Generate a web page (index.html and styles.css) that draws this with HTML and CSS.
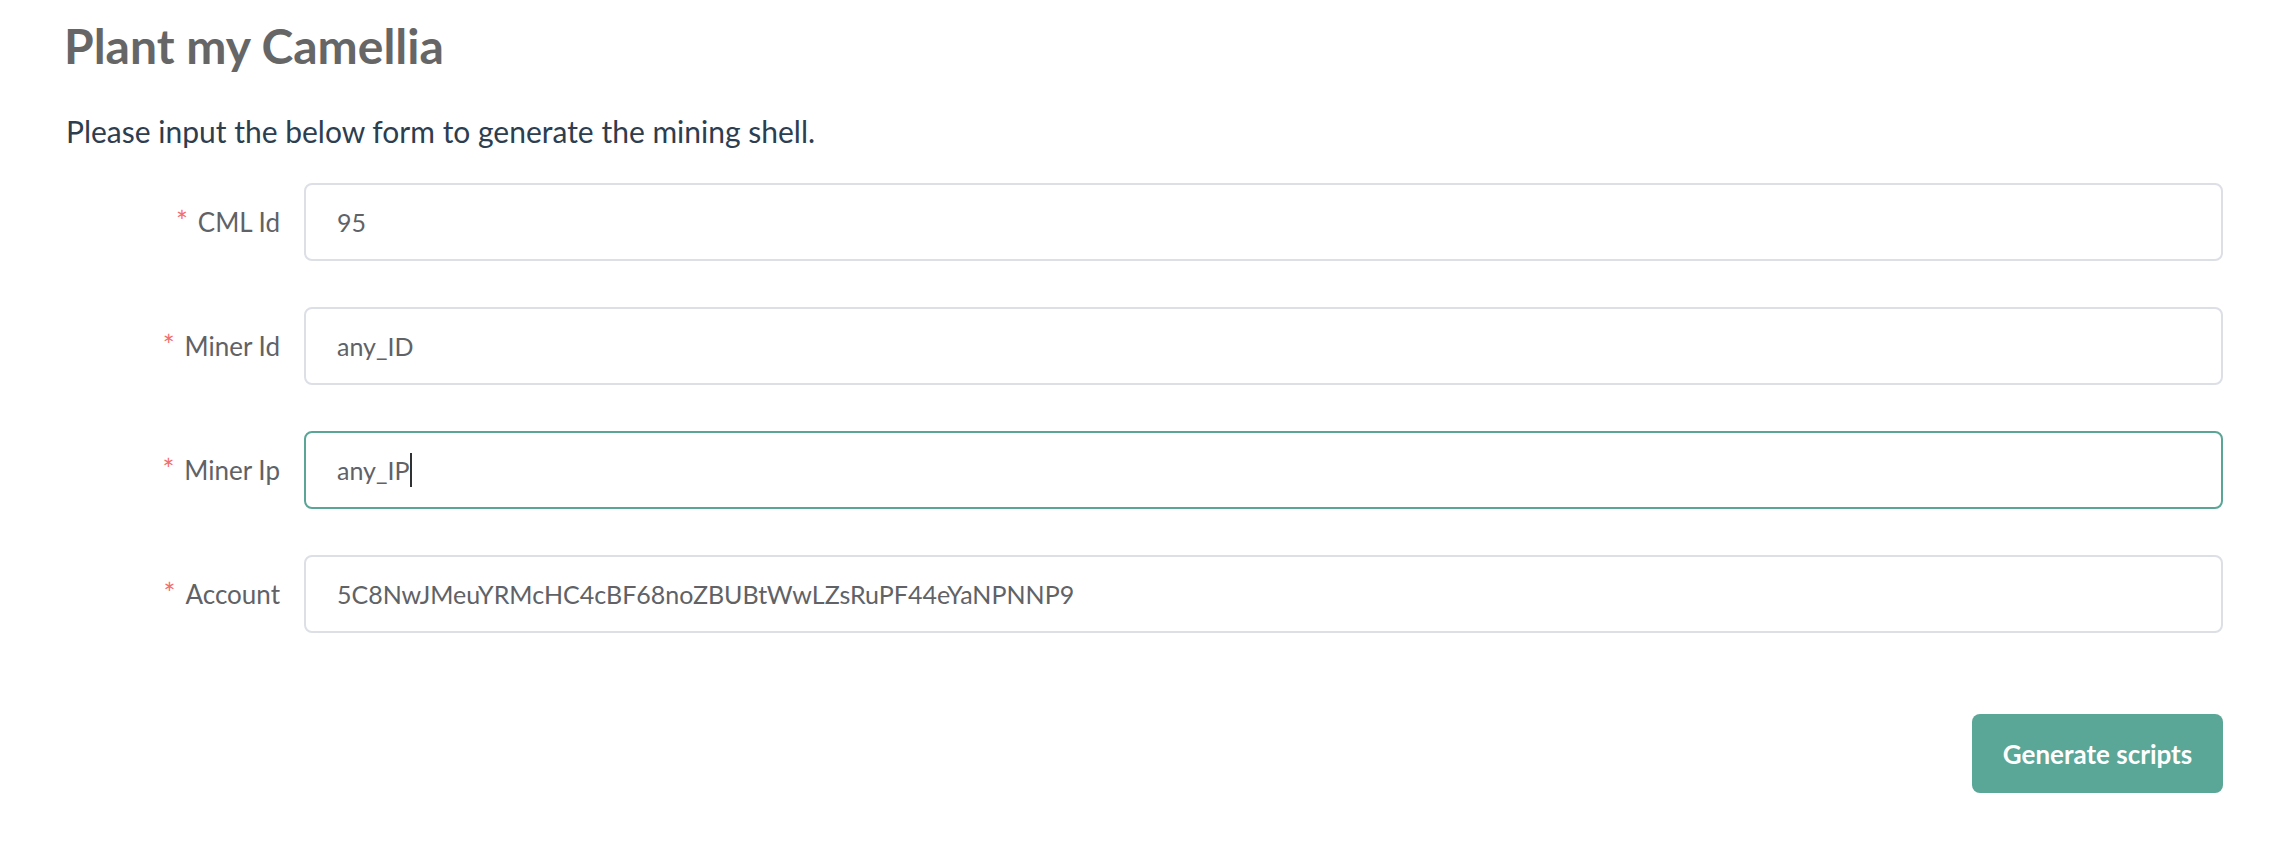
FILE: index.html
```html
<!DOCTYPE html>
<html lang="en">
<head>
<meta charset="utf-8">
<title>Plant my Camellia</title>
<link rel="stylesheet" href="styles.css">
</head>
<body>
<div class="page">
  <h2 class="title">Plant my Camellia</h2>
  <p class="intro">Please input the below form to generate the mining shell.</p>
  <form class="form">
    <div class="form-item">
      <label class="label"><span class="req">*</span>CML Id</label>
      <div class="input">95</div>
    </div>
    <div class="form-item">
      <label class="label"><span class="req">*</span>Miner Id</label>
      <div class="input">any_ID</div>
    </div>
    <div class="form-item">
      <label class="label"><span class="req">*</span>Miner Ip</label>
      <div class="input is-focus">any_IP<span class="caret"></span></div>
    </div>
    <div class="form-item">
      <label class="label"><span class="req">*</span>Account</label>
      <div class="input">5C8NwJMeuYRMcHC4cBF68noZBUBtWwLZsRuPF44eYaNPNNP9</div>
    </div>
    <div class="actions">
      <button type="button" class="btn">Generate scripts</button>
    </div>
  </form>
</div>
</body>
</html>
```
FILE: styles.css
```css
html, body {
  margin: 0;
  padding: 0;
  background: #ffffff;
}
body {
  font-family: Lato, "Noto Sans", "Liberation Sans", sans-serif;
}
.page {
  padding: 16px 55px 0 64px;
}
.title {
  margin: 0;
  font-size: 48px;
  line-height: 60px;
  font-weight: 700;
  color: #666666;
}
.intro {
  margin: 35px 0 0 2px;
  font-size: 30px;
  line-height: 40px;
  color: #2c3e50;
}
.form {
  margin-top: 32px;
}
.form-item {
  display: flex;
  align-items: stretch;
  height: 78px;
  margin-bottom: 46px;
}
.label {
  flex: 0 0 240px;
  box-sizing: border-box;
  height: 78px;
  padding-right: 24px;
  display: flex;
  align-items: center;
  justify-content: flex-end;
  font-size: 26px;
  line-height: 1;
  color: #606266;
}
.req {
  color: #f56c6c;
  margin-right: 10px;
  font-size: 28px;
  line-height: 1;
  position: relative;
  top: -1px;
}
.input {
  flex: 1;
  box-sizing: border-box;
  height: 78px;
  border: 2px solid #dcdfe6;
  border-radius: 8px;
  padding: 0 31px;
  display: flex;
  align-items: center;
  font-size: 25px;
  color: #606266;
  background: #fff;
  white-space: nowrap;
  overflow: hidden;
}
.input.is-focus {
  border-color: #5aa596;
}
.caret {
  display: inline-block;
  width: 2px;
  height: 34px;
  background: #303133;
  margin-left: 1px;
}
.actions {
  display: flex;
  justify-content: flex-end;
  margin-top: 81px;
}
.btn {
  height: 79px;
  width: 251px;
  border: none;
  border-radius: 8px;
  background: #5aa697;
  color: #ffffff;
  font-family: Lato, "Noto Sans", "Liberation Sans", sans-serif;
  font-size: 26px;
  font-weight: 700;
  padding: 0;
  cursor: pointer;
}
```
